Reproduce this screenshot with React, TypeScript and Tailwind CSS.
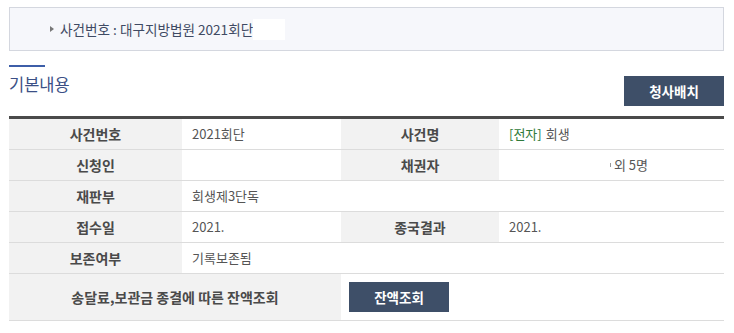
const label =
  "flex h-full items-center justify-center bg-[#f2f2f2] text-[14px] font-bold text-[#4a4a4a]";
const value = "flex h-full items-center bg-white pl-[10px] text-[#555]";
const cell = "h-[31px] border-b border-[#dcdcdc]";

const App = () => {
  return (
    <div
      className="h-[333px] w-[734px] overflow-hidden bg-white pl-[9px] pr-[10px] pt-[7px] text-[13px]"
      style={{ fontFamily: '"Noto Sans CJK KR", "Noto Sans", sans-serif' }}
    >
      {/* 상단 사건 안내 */}
      <div className="flex h-[44px] items-center border border-[#d4d7df] bg-[#f6f7fb] pl-[40px]">
        <span className="mr-[6px] inline-block h-0 w-0 border-y-[3px] border-l-[4px] border-y-transparent border-l-[#777]" />
        <span className="text-[13.6px] text-[#3f4a63]">
          사건번호 : 대구지방법원 2021회단
        </span>
        <span className="inline-block h-[21px] w-[32px] bg-white" />
      </div>

      {/* 제목 영역 */}
      <div className="mt-[14px] flex items-start justify-between">
        <div>
          <div className="h-[2px] w-[36px] bg-[#3d5ea8]" />
          <h2 className="mt-[4px] text-[16.5px] leading-[26px] text-[#3b4f86]">
            기본내용
          </h2>
        </div>
        <button className="mt-[11px] h-[30px] w-[100px] bg-[#3e4f68] text-[13.5px] font-bold text-white">
          청사배치
        </button>
      </div>

      {/* 기본내용 표 */}
      <div className="mt-[10px] grid grid-cols-[173px_159px_158px_1fr] border-t-[3px] border-[#4a4a4a]">
        <div className={cell}>
          <div className={label}>사건번호</div>
        </div>
        <div className={cell}>
          <div className={value}>2021회단</div>
        </div>
        <div className={cell}>
          <div className={label}>사건명</div>
        </div>
        <div className={cell}>
          <div className={value}>
            <span className="mr-[4px] text-[#2f7a3a]">[전자]</span>회생
          </div>
        </div>

        <div className={cell}>
          <div className={label}>신청인</div>
        </div>
        <div className={cell}>
          <div className={value} />
        </div>
        <div className={cell}>
          <div className={label}>채권자</div>
        </div>
        <div className={cell}>
          <div className={`${value} !pl-[111px]`}>
            <span className="mr-[3px] inline-block h-[4px] w-[1px] bg-[#999]" />
            외 5명
          </div>
        </div>

        <div className={cell}>
          <div className={label}>재판부</div>
        </div>
        <div className={`${cell} col-span-3`}>
          <div className={value}>회생제3단독</div>
        </div>

        <div className={cell}>
          <div className={label}>접수일</div>
        </div>
        <div className={cell}>
          <div className={value}>2021.</div>
        </div>
        <div className={cell}>
          <div className={label}>종국결과</div>
        </div>
        <div className={cell}>
          <div className={value}>2021.</div>
        </div>

        <div className={cell}>
          <div className={label}>보존여부</div>
        </div>
        <div className={`${cell} col-span-3`}>
          <div className={value}>기록보존됨</div>
        </div>

        <div className="col-span-2 h-[47px] border-b border-[#dcdcdc]">
          <div className={label}>송달료,보관금 종결에 따른 잔액조회</div>
        </div>
        <div className="col-span-2 h-[47px] border-b border-[#dcdcdc]">
          <div className="flex h-full items-center bg-white pl-[8px]">
            <button className="h-[30px] w-[100px] bg-[#3e4f68] text-[13.5px] font-bold text-white">
              잔액조회
            </button>
          </div>
        </div>
      </div>
    </div>
  );
};

export default App;
